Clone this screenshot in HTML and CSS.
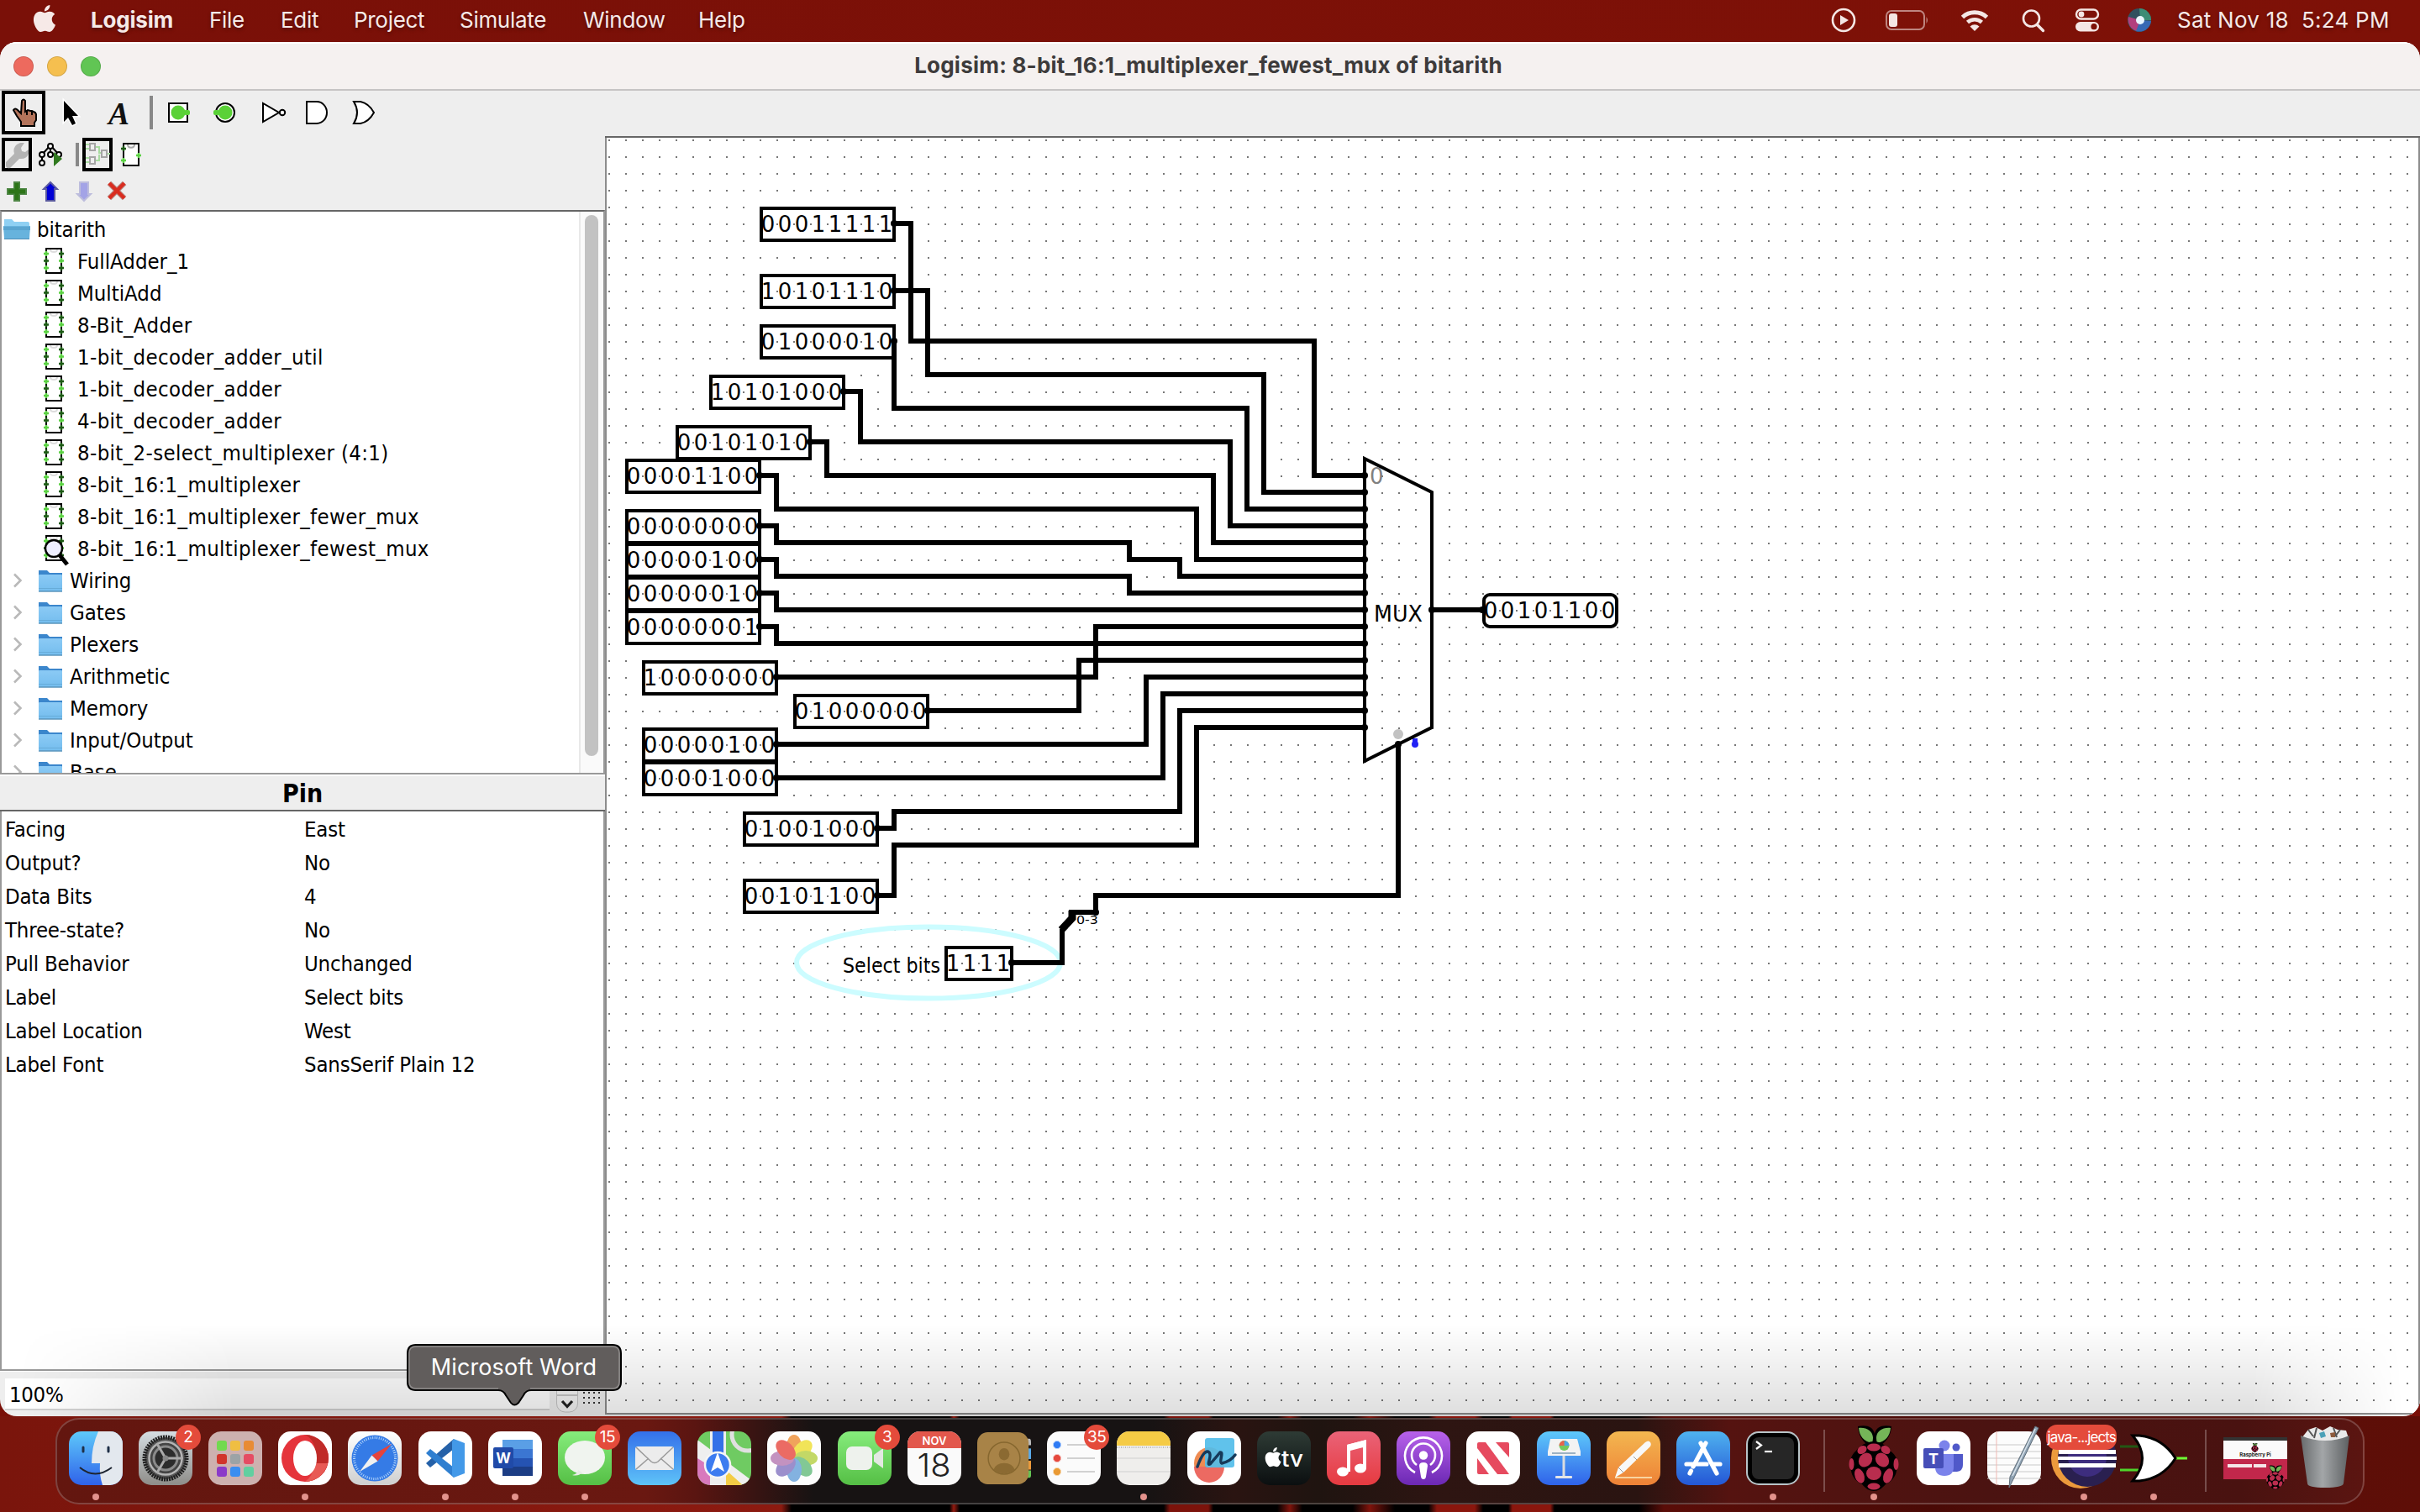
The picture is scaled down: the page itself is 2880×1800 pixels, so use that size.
FILE: index.html
```html
<!DOCTYPE html>
<html lang="en">
<head>
<meta charset="utf-8">
<title>Logisim: 8-bit_16:1_multiplexer_fewest_mux of bitarith</title>
<link rel="stylesheet" href="styles.css">
</head>
<body>
<svg class="defs" width="0" height="0" aria-hidden="true">
  <defs>
    <linearGradient id="gBlue" x1="0" y1="0" x2="0" y2="1"><stop offset="0" stop-color="#5ec9fa"/><stop offset="1" stop-color="#2f62ea"/></linearGradient>
    <linearGradient id="gMail" x1="0" y1="0" x2="0" y2="1"><stop offset="0" stop-color="#3470ea"/><stop offset="1" stop-color="#5ec3f8"/></linearGradient>
    <linearGradient id="gGreen" x1="0" y1="0" x2="0" y2="1"><stop offset="0" stop-color="#86ec7c"/><stop offset="1" stop-color="#55bf45"/></linearGradient>
    <linearGradient id="gGray" x1="0" y1="0" x2="0" y2="1"><stop offset="0" stop-color="#d5dde2"/><stop offset="1" stop-color="#8e8d89"/></linearGradient>
    <linearGradient id="gSilver" x1="0" y1="0" x2="0" y2="1"><stop offset="0" stop-color="#ffffff"/><stop offset="1" stop-color="#cfcfcf"/></linearGradient>
    <linearGradient id="gMusic" x1="0" y1="0" x2="0" y2="1"><stop offset="0" stop-color="#ea6378"/><stop offset="1" stop-color="#e63a40"/></linearGradient>
    <linearGradient id="gPod" x1="0" y1="0" x2="0" y2="1"><stop offset="0" stop-color="#b862ea"/><stop offset="1" stop-color="#6c28b4"/></linearGradient>
    <linearGradient id="gPages" x1="0" y1="0" x2="0" y2="1"><stop offset="0" stop-color="#f3b750"/><stop offset="1" stop-color="#ee8136"/></linearGradient>
    <linearGradient id="gStore" x1="0" y1="0" x2="0" y2="1"><stop offset="0" stop-color="#4fb2ef"/><stop offset="1" stop-color="#2457d6"/></linearGradient>
    <linearGradient id="gTv" x1="0" y1="0" x2="0" y2="1"><stop offset="0" stop-color="#2e3b35"/><stop offset="1" stop-color="#0b0f10"/></linearGradient>
    <linearGradient id="gBin" x1="0" y1="0" x2="1" y2="0"><stop offset="0" stop-color="#686b6d"/><stop offset=".45" stop-color="#a3a6a8"/><stop offset="1" stop-color="#5d6062"/></linearGradient>
    <linearGradient id="gFolder" x1="0" y1="0" x2="0" y2="1"><stop offset="0" stop-color="#8bcaf5"/><stop offset="1" stop-color="#74bdee"/></linearGradient>
    <clipPath id="tile"><rect width="64" height="64" rx="15"/></clipPath>
    <path id="apple" d="M12.152 6.896c-.948 0-2.415-1.078-3.96-1.04-2.04.027-3.91 1.183-4.961 3.014-2.117 3.675-.546 9.103 1.519 12.09 1.013 1.454 2.208 3.09 3.792 3.039 1.52-.065 2.09-.987 3.935-.987 1.831 0 2.35.987 3.96.948 1.637-.026 2.676-1.48 3.676-2.948 1.156-1.688 1.636-3.325 1.662-3.415-.039-.013-3.182-1.221-3.22-4.857-.026-3.04 2.48-4.494 2.597-4.559-1.429-2.09-3.623-2.324-4.39-2.376-2-.156-3.675 1.09-4.61 1.09zM15.53 3.83c.843-1.012 1.4-2.427 1.245-3.83-1.207.052-2.662.805-3.532 1.818-.78.896-1.454 2.338-1.273 3.714 1.338.104 2.715-.688 3.559-1.701"/>
    <g id="raspberry">
      <path d="M32 22C24 16 14 10 13-6C23-8 31-6 33 3C35-6 43-8 53-6C52 10 42 16 32 22Z" fill="#000"/>
      <path d="M14-4c9-1 16 3 17 11c0 4-1 7-1 7C20 12 15 6 14-4zM52-4c-9-1-16 3-17 11c0 4 1 7 1 7C46 12 51 6 52-4z" fill="#75b558"/>
      <path d="M33 12c8 0 15 5 19 11c8 5 12 15 8 24c-1 7-6 13-13 16c-4 5-9 8-14 8s-10-3-14-8c-7-3-12-9-13-16c-4-9 0-19 6-24c4-6 13-11 21-11z" fill="#000" transform="translate(-1 0)"/>
      <g fill="#b92d4e"><ellipse cx="32" cy="19" rx="8" ry="4.500"/><ellipse cx="18" cy="22" rx="6" ry="4.500" transform="rotate(-35 18 22)"/><ellipse cx="46" cy="22" rx="6" ry="4.500" transform="rotate(35 46 22)"/><ellipse cx="22" cy="34" rx="9" ry="7.500" transform="rotate(-50 22 34)"/><ellipse cx="42" cy="34" rx="9" ry="7.500" transform="rotate(50 42 34)"/><ellipse cx="32" cy="50" rx="9" ry="8"/><ellipse cx="15" cy="53" rx="5.500" ry="9" transform="rotate(-20 15 53)"/><ellipse cx="49" cy="53" rx="5.500" ry="9" transform="rotate(20 49 53)"/><ellipse cx="5.500" cy="39" rx="3" ry="7"/><ellipse cx="58.500" cy="39" rx="3" ry="7"/><ellipse cx="32" cy="65.500" rx="7.500" ry="4"/></g>
    </g>
    <symbol id="chip" viewBox="0 0 24 32">
      <rect x="3" y="1" width="18" height="29" fill="#fff" stroke="#000" stroke-width="2"/>
      <path d="M8 2c0 4 8 4 8 0" fill="none" stroke="#ddd" stroke-width="2"/>
      <path d="M0 7h6M3 4v6M0 24h6M3 21v6M18 15.500h6M21 12v6" stroke="#5ad142" stroke-width="2.400"/>
      <path d="M0 15.500h6M3 12v6M18 7h6M21 4v6M18 24h6M21 21v6" stroke="#1c5a14" stroke-width="2.400"/>
    </symbol>
    <symbol id="chip-view" viewBox="0 0 30 38">
      <use href="#chip" width="24" height="32"/>
      <circle cx="12" cy="16" r="10" fill="#eef" stroke="#000" stroke-width="2.400"/>
      <path d="M19 24l9 11" stroke="#000" stroke-width="5"/>
    </symbol>
    <symbol id="folder" viewBox="0 0 30 28">
      <path d="M1 2h10l3 3h15v7H1z" fill="#3b86cc"/>
      <rect x="1" y="7" width="28" height="20" rx="1" fill="url(#gFolder)"/>
      <path d="M1 23.500h28" stroke="#67acd9" stroke-width="1"/><path d="M1 27h28" stroke="#5b96bd" stroke-width="1.500"/>
    </symbol>
    <symbol id="folder-open" viewBox="0 0 32 26">
      <path d="M1 1h9l3 3h16q2 0 2 2v4H1z" fill="#8fd0f3"/>
      <path d="M0 9h32l-1 15H1z" fill="#67b3dd"/><path d="M0 10h32v4H0z" fill="#5aa5d0"/><path d="M1 24.500h30" stroke="#4f8fb8" stroke-width="1"/>
    </symbol>
    <symbol id="chev" viewBox="0 0 12 18"><path d="M2 1.500l7.500 7.500-7.500 7.500" fill="none" stroke="#b9b9b9" stroke-width="2.600"/></symbol>
    <pattern id="grid" x="724" y="166" width="20" height="20" patternUnits="userSpaceOnUse"><rect width="2" height="2" fill="#777"/></pattern>
    <g id="pin8"><rect x="-158" y="-18" width="158" height="38"/><circle r="4"/></g>
  </defs>
</svg>

<header class="menubar">
  <svg class="apple" viewBox="0 0 24 24"><use href="#apple" fill="#f6e9e7"/></svg>
  <nav class="menus">
    <b>Logisim</b><span>File</span><span>Edit</span><span>Project</span><span>Simulate</span><span>Window</span><span>Help</span>
  </nav>
  <svg class="status" viewBox="2176 0 400 48" fill="none" stroke="#f4e6e4">
    <circle cx="2194" cy="24" r="13" stroke-width="2.600"/><path d="M2190 18l10 6-10 6z" fill="#f4e6e4" stroke="none"/>
    <rect x="2245" y="13" width="45" height="22" rx="6" stroke-width="2" opacity=".55"/><rect x="2248" y="16" width="10" height="16" rx="3" fill="#f4e6e4" stroke="none"/><path d="M2292.500 20q3 4 0 8z" fill="#f4e6e4" stroke="none" opacity=".55"/>
    <path d="M2335.500 20.500a21.500 21.500 0 0 1 29 0" stroke-width="5"/><path d="M2341.500 26.500a12.500 12.500 0 0 1 17 0" stroke-width="4.500"/><path d="M2344.500 31.500a8 8 0 0 1 11 0l-5.500 5.500z" fill="#f4e6e4" stroke="none"/>
    <circle cx="2417.500" cy="22" r="9.500" stroke-width="2.600"/><path d="M2424.500 29.500l7 7" stroke-width="3.400" stroke-linecap="round"/>
    <rect x="2471" y="11.500" width="26" height="11" rx="5.500" stroke-width="2.400"/><circle cx="2477" cy="17" r="3.400" fill="#f4e6e4" stroke="none"/>
    <rect x="2470" y="26" width="28" height="11.500" rx="5.700" fill="#f4e6e4" stroke="none"/><circle cx="2492" cy="31.700" r="3.600" fill="#7b1107" stroke="none"/>
    <circle cx="2546" cy="24" r="14" fill="#31505f" stroke="none"/><path d="M2533 20a14 14 0 0 0 10 17l4-13z" fill="#b23f7e" stroke="none"/><path d="M2546 10a14 14 0 0 1 14 14l-13 0z" fill="#3c8d76" stroke="none"/><path d="M2542 37a14 14 0 0 0 18-12l-13-1z" fill="#3769b4" stroke="none"/><ellipse cx="2547" cy="24" rx="5" ry="5" fill="#e8f6ff" stroke="none"/>
  </svg>
  <span class="clock">Sat Nov 18&nbsp; 5:24 PM</span>
</header>

<main class="window">
  <div class="titlebar">
    <div class="lights"><i class="red"></i><i class="amber"></i><i class="green"></i></div>
    <h1>Logisim: 8-bit_16:1_multiplexer_fewest_mux of bitarith</h1>
  </div>
  <svg class="toolbar" viewBox="0 108 480 54">
    <rect x="4" y="110" width="48" height="48" fill="none" stroke="#000" stroke-width="4"/>
    <path d="M26 120q2-3 4 0v13l3-2 3 1 2 0 4 2 1 2v7l-2 3v4H25v-5l-5-7-4-7q2-3 5 0l4 4z" fill="#b3735a" stroke="#000" stroke-width="2"/>
    <path d="M32 132v5M38 133v4" stroke="#000" stroke-width="2"/>
    <path d="M76 120v25l5-5 5 9 4-2-4-9h7z" stroke="#fff" stroke-width="3" fill="#000" paint-order="stroke"/>
    <text class="tool-text" x="129" y="148" textLength="25" lengthAdjust="spacingAndGlyphs">A</text>
    <rect x="178" y="114" width="4" height="40" fill="#888"/>
    <rect x="201" y="123" width="22" height="22" fill="#fff" stroke="#000" stroke-width="2"/><circle cx="212" cy="134" r="8.500" fill="#5ad137"/><rect x="219" y="131" width="7" height="6" rx="2" fill="#5ad137"/>
    <circle cx="268" cy="134" r="11" fill="#fff" stroke="#000" stroke-width="2"/><circle cx="268" cy="134" r="8.500" fill="#5ad137"/><rect x="254" y="131" width="7" height="6" rx="2" fill="#5ad137"/>
    <path d="M313 123v22l19-11z" fill="#fff" stroke="#000" stroke-width="2"/><circle cx="336" cy="134" r="3.200" fill="#fff" stroke="#000" stroke-width="2"/>
    <path d="M365 121h12a12 13 0 0 1 0 26h-12z" fill="#fff" stroke="#000" stroke-width="2"/>
    <path d="M421 121h8q10 2 16 13q-6 11-16 13h-8q8-13 0-26z" fill="#fff" stroke="#000" stroke-width="2"/>
  </svg>
  <div class="workspace">
    <aside class="side">
      <svg class="subbar" viewBox="0 162 720 88">
        <rect x="4" y="166" width="32" height="36" fill="none" stroke="#000" stroke-width="4"/>
        <path d="M7 193l10-10q-2-7 3-11l4-2h5l-4 6 1 4 4 1 4-3v5q-2 6-9 6h-2l-11 11q-4 1-5-2z" fill="#b4b4b4"/>
        <path d="M60 173l-10 11M60 173l10 11M60 176v8M50 186v8" stroke="#000" stroke-width="2"/>
        <g fill="#fff" stroke="#000" stroke-width="2"><circle cx="60" cy="174" r="3"/><circle cx="50" cy="184" r="3"/><circle cx="60" cy="184" r="3"/><circle cx="50" cy="194" r="3"/><circle cx="70" cy="184" r="3"/></g>
        <path d="M64 181l10 8-10 9z" fill="#307a1f"/>
        <rect x="90" y="170" width="4" height="28" fill="#888"/>
        <rect x="100" y="166" width="32" height="36" fill="none" stroke="#000" stroke-width="4"/>
        <g fill="none" stroke-width="2"><path d="M102 172h5M102 177h5M102 188h5M102 193h5M114 175h4v7h4M114 191h4v-7M128 183h3" stroke="#a9dca1"/><rect x="107" y="171" width="6" height="8" stroke="#a5a5a5"/><rect x="107" y="187" width="6" height="8" stroke="#a5a5a5"/><rect x="121" y="179" width="6" height="8" stroke="#a5a5a5"/></g>
        <rect x="147" y="171" width="18" height="26" fill="#fff" stroke="#000" stroke-width="2"/><path d="M152 172c0 5 8 5 8 0" fill="none" stroke="#aaa" stroke-width="2"/>
        <path d="M144 177h6M147 174v6" stroke="#1c5a14" stroke-width="2.400"/><path d="M144 191h6M147 188v6M162 185h6M165 182v6" stroke="#5ad142" stroke-width="2.400"/>
        <path d="M20 216v24M8 228h24" stroke="#4f8746" stroke-width="8"/><path d="M20 218v20M10 228h20" stroke="#2d7518" stroke-width="5"/>
        <path d="M60 217l8 8h-3v14h-10v-14h-3z" fill="#0000d6" stroke="#5a5aa0" stroke-width="2"/>
        <path d="M100 239l8-8h-3v-14h-10v14h-3z" fill="#a3a3e6" stroke="#bdbddd" stroke-width="2"/>
        <path d="M130 218l18 18M148 218l-18 18" stroke="#b98e88" stroke-width="6.500"/><path d="M130 218l18 18M148 218l-18 18" stroke="#d92d20" stroke-width="4.500"/>
      </svg>
      <section class="tree">
        <ul>
          <li class="root"><svg><use href="#folder-open"/></svg>bitarith</li>
          <li class="leaf"><svg><use href="#chip"/></svg>FullAdder_1</li>
          <li class="leaf"><svg><use href="#chip"/></svg>MultiAdd</li>
          <li class="leaf loose"><svg><use href="#chip"/></svg>8-Bit_Adder</li>
          <li class="leaf loose"><svg><use href="#chip"/></svg>1-bit_decoder_adder_util</li>
          <li class="leaf loose"><svg><use href="#chip"/></svg>1-bit_decoder_adder</li>
          <li class="leaf loose"><svg><use href="#chip"/></svg>4-bit_decoder_adder</li>
          <li class="leaf loose"><svg><use href="#chip"/></svg>8-bit_2-select_multiplexer (4:1)</li>
          <li class="leaf loose"><svg><use href="#chip"/></svg>8-bit_16:1_multiplexer</li>
          <li class="leaf loose"><svg><use href="#chip"/></svg>8-bit_16:1_multiplexer_fewer_mux</li>
          <li class="leaf loose current"><svg><use href="#chip-view"/></svg>8-bit_16:1_multiplexer_fewest_mux</li>
          <li class="lib"><svg class="chev"><use href="#chev"/></svg><svg><use href="#folder"/></svg>Wiring</li>
          <li class="lib"><svg class="chev"><use href="#chev"/></svg><svg><use href="#folder"/></svg>Gates</li>
          <li class="lib"><svg class="chev"><use href="#chev"/></svg><svg><use href="#folder"/></svg>Plexers</li>
          <li class="lib"><svg class="chev"><use href="#chev"/></svg><svg><use href="#folder"/></svg>Arithmetic</li>
          <li class="lib"><svg class="chev"><use href="#chev"/></svg><svg><use href="#folder"/></svg>Memory</li>
          <li class="lib"><svg class="chev"><use href="#chev"/></svg><svg><use href="#folder"/></svg>Input/Output</li>
          <li class="lib"><svg class="chev"><use href="#chev"/></svg><svg><use href="#folder"/></svg>Base</li>
        </ul>
        <div class="track"><div class="thumb"></div></div>
      </section>
      <h2>Pin</h2>
      <dl class="attrs">
        <dt>Facing</dt><dd>East</dd>
        <dt>Output?</dt><dd>No</dd>
        <dt>Data Bits</dt><dd>4</dd>
        <dt>Three-state?</dt><dd>No</dd>
        <dt>Pull Behavior</dt><dd>Unchanged</dd>
        <dt>Label</dt><dd>Select bits</dd>
        <dt>Label Location</dt><dd>West</dd>
        <dt>Label Font</dt><dd>SansSerif Plain 12</dd>
      </dl>
      <div class="zoombar">
        <div class="zoom">100%</div>
        <svg class="spin" viewBox="660 1634 60 50">
          <rect x="662.500" y="1638" width="25" height="42" rx="10" fill="#f4f4f4" stroke="#c4c4c4"/><path d="M662 1660h26" stroke="#c4c4c4" stroke-width="2"/><path d="M669 1667l6 6.500 6-6.500" fill="none" stroke="#222" stroke-width="3.200"/>
          <path d="M694 1657h22M694 1663h22M694 1669h22" stroke="#333" stroke-width="2" stroke-dasharray="2 4"/>
        </svg>
      </div>
    </aside>
    <svg class="canvas" viewBox="720 162 2160 1522">
      <rect x="720" y="162" width="2160" height="1522" fill="#fff"/>
      <rect x="722" y="164" width="2154" height="1518" fill="url(#grid)"/>
      <ellipse cx="1105" cy="1146" rx="157" ry="42.500" fill="none" stroke="#ccfcff" stroke-width="6"/>
      <g class="wires">
        <path d="M1064 266H1084V406H1564V566H1624"/>
        <path d="M1064 346H1104V446H1504V586H1624"/>
        <path d="M1064 406V486H1484V606H1624"/>
        <path d="M1004 466H1024V526H1464V626H1624"/>
        <path d="M964 526H984V566H1444V646H1624"/>
        <path d="M904 566H924V606H1424V666H1624"/>
        <path d="M904 626H924V646H1344V666H1404V686H1624"/>
        <path d="M904 666H924V686H1344V706H1624"/>
        <path d="M904 706H924V726H1624"/>
        <path d="M904 746H924V766H1624"/>
        <path d="M924 806H1304V746H1624"/>
        <path d="M1104 846H1284V786H1624"/>
        <path d="M924 886H1364V806H1624"/>
        <path d="M924 926H1384V826H1624"/>
        <path d="M1044 986H1064V966H1404V846H1624"/>
        <path d="M1044 1066H1064V1006H1424V866H1624"/>
        <path d="M1204 1146H1264V1106M1304 1086V1066H1664V884"/>
        <path d="M1704 726H1764M1272 1086H1304"/>
        <path class="splitter" d="M1263 1107L1276 1093V1084"/>
      </g>
      <path d="M1684 879v8" stroke="#2222f5" stroke-width="6"/><circle cx="1684" cy="886" r="4" fill="#2222f5"/>
      <circle cx="1664" cy="874" r="6" fill="#c2c2c2"/>
      <path class="mux" d="M1624 546L1704 586V866L1624 906Z"/>
      <g class="ports">
        <circle cx="1624" cy="566" r="4"/><circle cx="1624" cy="586" r="4"/><circle cx="1624" cy="606" r="4"/><circle cx="1624" cy="626" r="4"/><circle cx="1624" cy="646" r="4"/><circle cx="1624" cy="666" r="4"/><circle cx="1624" cy="686" r="4"/><circle cx="1624" cy="706" r="4"/><circle cx="1624" cy="726" r="4"/><circle cx="1624" cy="746" r="4"/><circle cx="1624" cy="766" r="4"/><circle cx="1624" cy="786" r="4"/><circle cx="1624" cy="806" r="4"/><circle cx="1624" cy="826" r="4"/><circle cx="1624" cy="846" r="4"/><circle cx="1624" cy="866" r="4"/><circle cx="1704" cy="726" r="4"/><circle cx="1764" cy="726" r="4"/><circle cx="1664" cy="886" r="4"/><circle cx="1304" cy="1086" r="4"/>
      </g>
      <g class="pins">
        <g transform="translate(1064 266)"><use href="#pin8"/><text y="10" x="-150 -130 -110 -90 -70 -50 -30 -10">00011111</text></g>
        <g transform="translate(1064 346)"><use href="#pin8"/><text y="10" x="-150 -130 -110 -90 -70 -50 -30 -10">10101110</text></g>
        <g transform="translate(1064 406)"><use href="#pin8"/><text y="10" x="-150 -130 -110 -90 -70 -50 -30 -10">01000010</text></g>
        <g transform="translate(1004 466)"><use href="#pin8"/><text y="10" x="-150 -130 -110 -90 -70 -50 -30 -10">10101000</text></g>
        <g transform="translate(964 526)"><use href="#pin8"/><text y="10" x="-150 -130 -110 -90 -70 -50 -30 -10">00101010</text></g>
        <g transform="translate(904 566)"><use href="#pin8"/><text y="10" x="-150 -130 -110 -90 -70 -50 -30 -10">00001100</text></g>
        <g transform="translate(904 626)"><use href="#pin8"/><text y="10" x="-150 -130 -110 -90 -70 -50 -30 -10">00000000</text></g>
        <g transform="translate(904 666)"><use href="#pin8"/><text y="10" x="-150 -130 -110 -90 -70 -50 -30 -10">00000100</text></g>
        <g transform="translate(904 706)"><use href="#pin8"/><text y="10" x="-150 -130 -110 -90 -70 -50 -30 -10">00000010</text></g>
        <g transform="translate(904 746)"><use href="#pin8"/><text y="10" x="-150 -130 -110 -90 -70 -50 -30 -10">00000001</text></g>
        <g transform="translate(924 806)"><use href="#pin8"/><text y="10" x="-150 -130 -110 -90 -70 -50 -30 -10">10000000</text></g>
        <g transform="translate(1104 846)"><use href="#pin8"/><text y="10" x="-150 -130 -110 -90 -70 -50 -30 -10">01000000</text></g>
        <g transform="translate(924 886)"><use href="#pin8"/><text y="10" x="-150 -130 -110 -90 -70 -50 -30 -10">00000100</text></g>
        <g transform="translate(924 926)"><use href="#pin8"/><text y="10" x="-150 -130 -110 -90 -70 -50 -30 -10">00001000</text></g>
        <g transform="translate(1044 986)"><use href="#pin8"/><text y="10" x="-150 -130 -110 -90 -70 -50 -30 -10">01001000</text></g>
        <g transform="translate(1044 1066)"><use href="#pin8"/><text y="10" x="-150 -130 -110 -90 -70 -50 -30 -10">00101100</text></g>
        <g transform="translate(1204 1146)"><rect x="-78" y="-18" width="78" height="38"/><circle r="4"/><text y="10" x="-70 -50 -30 -10">1111</text></g>
        <g transform="translate(1924 726)"><rect x="-158" y="-18" width="158" height="38" rx="7"/><text y="10" x="-150 -130 -110 -90 -70 -50 -30 -10">00101100</text></g>
      </g>
      <g class="labels">
        <text x="1003" y="1157.500" textLength="116" lengthAdjust="spacingAndGlyphs">Select bits</text>
        <text class="sans" x="1635" y="739.500" font-size="26" textLength="58" lengthAdjust="spacingAndGlyphs">MUX</text>
        <text class="sans" x="1630" y="576" font-size="26" fill="#808080">0</text>
        <text x="1281" y="1100" font-size="14.500" textLength="26" lengthAdjust="spacingAndGlyphs">0-3</text>
      </g>
      <path d="M720 163H2880" stroke="#666" stroke-width="2"/>
      <path d="M721 164V1683H2879V164" fill="none" stroke="#8c8c8c" stroke-width="2"/>
    </svg>
  </div>
  <div class="dockshade"></div>
</main>

<nav class="dock">
  <div class="app on"><svg viewBox="0 0 64 64"><g clip-path="url(#tile)"><rect width="64" height="64" fill="url(#gBlue)"/><path d="M35 0Q27 18 27 38h10Q36 52 40 64H64V0z" fill="#e3e8ee"/></g><path d="M17 19v5M47 19v5" stroke="#1e2f47" stroke-width="3" stroke-linecap="round"/><path d="M13 43q18 15 38 0" fill="none" stroke="#1e2530" stroke-width="2"/></svg></div>
  <div class="app"><svg viewBox="0 0 64 64"><rect width="64" height="64" rx="15" fill="url(#gGray)"/><circle cx="32" cy="32" r="25" fill="#575757" stroke="#202020" stroke-width="5" stroke-dasharray="2 1"/><circle cx="32" cy="32" r="19.500" fill="#444" stroke="#b4b4b4" stroke-width="2.500"/><circle cx="32" cy="32" r="14" fill="#2c2c2c" stroke="#8a8a8a" stroke-width="3"/><path d="M32 32h21M32 32L21.500 14M32 32L21.500 50" stroke="#aaa" stroke-width="3"/><circle cx="32" cy="32" r="3.500" fill="#888"/></svg><b class="badge">2</b></div>
  <div class="app"><svg viewBox="0 0 64 64"><rect width="64" height="64" rx="15" fill="#cdb1af"/><rect x="10" y="11" width="12" height="12" rx="3" fill="#72d94f"/><rect x="26" y="11" width="12" height="12" rx="3" fill="#efbe42"/><rect x="42" y="11" width="12" height="12" rx="3" fill="#e88b34"/><rect x="10" y="27" width="12" height="12" rx="3" fill="#d1352b"/><rect x="26" y="27" width="12" height="12" rx="3" fill="#9ca3a6"/><rect x="42" y="27" width="12" height="12" rx="3" fill="#e54c63"/><rect x="10" y="42" width="12" height="12" rx="3" fill="#8a3bc9"/><rect x="26" y="42" width="12" height="12" rx="3" fill="#3b8ef0"/><rect x="42" y="42" width="12" height="12" rx="3" fill="#61cfa0"/></svg></div>
  <div class="app on"><svg viewBox="0 0 64 64"><rect width="64" height="64" rx="15" fill="#fff"/><ellipse cx="32" cy="32" rx="28" ry="28" fill="#e5343b"/><path d="M32 4a28 28 0 0 1 0 56q13-6 13-28T32 4z" fill="#c02b28"/><path d="M32 60a28 28 0 0 0 27-22l-15 0q-3 16-12 22z" fill="#e85a55"/><ellipse cx="32" cy="32" rx="14" ry="21" fill="#fff"/></svg></div>
  <div class="app"><svg viewBox="0 0 64 64"><rect width="64" height="64" rx="15" fill="url(#gSilver)"/><circle cx="32" cy="32" r="27.500" fill="#357be6"/><circle cx="32" cy="32" r="24.500" fill="none" stroke="#b5d6fa" stroke-width="3" stroke-dasharray="1 1.600"/><path d="M52 15L35.500 35.500 28.500 28.500z" fill="#e5433b"/><path d="M14 48L28.500 28.500 35.500 35.500z" fill="#f0f0f0"/></svg></div>
  <div class="app on"><svg viewBox="0 0 64 64"><rect width="64" height="64" rx="15" fill="#fff"/><path d="M42 9v12L14 43l-5-5z" fill="#2561a8"/><path d="M9 26l5-5 28 22v12z" fill="#2f7fd0"/><path d="M42 9l13 5v36l-13 5-2-3V12z" fill="#4399e8"/></svg></div>
  <div class="app on"><svg viewBox="0 0 64 64"><rect width="64" height="64" rx="15" fill="#fff"/><rect x="17" y="10" width="36" height="11" fill="#5a9fe6"/><rect x="17" y="21" width="36" height="11" fill="#3b76d2"/><rect x="17" y="32" width="36" height="10" fill="#2553b2"/><rect x="17" y="42" width="36" height="11" fill="#1c3d85"/><rect x="6" y="19" width="24" height="25" rx="2" fill="#204aa8"/><text x="18" y="38" font-size="17" font-weight="bold" fill="#fff" text-anchor="middle">W</text></svg></div>
  <div class="app on"><svg viewBox="0 0 64 64"><rect width="64" height="64" rx="15" fill="url(#gGreen)"/><ellipse cx="32" cy="31" rx="24" ry="20" fill="#f0f4ef"/><path d="M17 52q6-1 7-6l5 3q-5 5-12 3z" fill="#e7ece6"/></svg><b class="badge">15</b></div>
  <div class="app"><svg viewBox="0 0 64 64"><rect width="64" height="64" rx="15" fill="url(#gMail)"/><rect x="9" y="18" width="46" height="28" rx="3" fill="#ececec"/><path d="M10 19l18 17q4 3 8 0l18-17M10 45l15-13M54 45L39 32" fill="none" stroke="#9a9a9a" stroke-width="1.500"/></svg></div>
  <div class="app"><svg viewBox="0 0 64 64"><g clip-path="url(#tile)"><rect width="64" height="64" fill="#6fcb62"/><path d="M0 10L64 58v6H34L0 34z" fill="#efefef"/><path d="M0 32l16 10v22H0z" fill="#d879bd"/><path d="M34 46l20 18H34z" fill="#f3cc46"/><path d="M15 0h19v64H15z" fill="#eee"/><path d="M18 0h13v42H18z" fill="#3470e8"/><circle cx="60" cy="4" r="19" fill="none" stroke="#e0e0e0" stroke-width="5"/></g><circle cx="24" cy="40" r="15" fill="#3d7cf0" stroke="#f5f5f5" stroke-width="2.500"/><path d="M24 25l8 23-8-5-8 5z" fill="#fff"/></svg></div>
  <div class="app"><svg viewBox="0 0 64 64"><rect width="64" height="64" rx="15" fill="#fdfdfd"/><g opacity=".85"><ellipse cx="32" cy="18" rx="9" ry="14" fill="#ee9440"/><ellipse cx="32" cy="18" rx="9" ry="14" fill="#efe03c" transform="rotate(45 32 32)"/><ellipse cx="32" cy="18" rx="9" ry="14" fill="#b9d24c" transform="rotate(90 32 32)"/><ellipse cx="32" cy="18" rx="9" ry="14" fill="#6dbf83" transform="rotate(135 32 32)"/><ellipse cx="32" cy="18" rx="9" ry="14" fill="#6ea6dc" transform="rotate(180 32 32)"/><ellipse cx="32" cy="18" rx="9" ry="14" fill="#8a7cc4" transform="rotate(225 32 32)"/><ellipse cx="32" cy="18" rx="9" ry="14" fill="#b980b6" transform="rotate(270 32 32)"/><ellipse cx="32" cy="18" rx="9" ry="14" fill="#e8524a" transform="rotate(315 32 32)"/></g></svg></div>
  <div class="app"><svg viewBox="0 0 64 64"><rect width="64" height="64" rx="15" fill="url(#gGreen)"/><rect x="10" y="18" width="31" height="28" rx="7" fill="#eef2ed"/><path d="M43 28l11-8v24l-11-8z" fill="#e3e8e2"/></svg><b class="badge">3</b></div>
  <div class="app"><svg viewBox="0 0 64 64"><g clip-path="url(#tile)"><rect width="64" height="64" fill="#fafafa"/><rect width="64" height="20" fill="#e2574c"/></g><text x="32" y="15.500" font-size="13" font-weight="600" fill="#fff" text-anchor="middle">NOV</text><text x="31.500" y="54" font-size="38" font-weight="300" fill="#222" text-anchor="middle" textLength="40" lengthAdjust="spacingAndGlyphs">18</text></svg></div>
  <div class="app"><svg viewBox="0 0 66 64"><path d="M58 8h6q2 0 2 4v4h-8z" fill="#b9b9b9"/><path d="M58 20h8v13h-8z" fill="#5aaae8"/><path d="M58 35h8v11h-8z" fill="#ee9b3b"/><path d="M58 47h8v6q0 3-2 3h-6z" fill="#64c453"/><rect width="63" height="64" rx="13" fill="#a88347"/><circle cx="33" cy="32" r="19.500" fill="none" stroke="#86672f" stroke-width="1.500"/><ellipse cx="33" cy="27" rx="6.500" ry="7.500" fill="#8b6a32"/><path d="M20 46q3-8 13-8t13 8q-13 10-26 0z" fill="#8b6a32"/></svg></div>
  <div class="app"><svg viewBox="0 0 64 64"><rect width="64" height="64" rx="15" fill="#fbfbfb"/><circle cx="12" cy="16" r="4.600" fill="#2f7bf4" stroke="#b7d2fb"/><circle cx="12" cy="32" r="4.600" fill="#e5483d" stroke="#f4beba"/><circle cx="12" cy="48" r="4.600" fill="#ea9a34" stroke="#f6dab2"/><path d="M24 16h33M24 32h33M24 48h33" stroke="#c4c4c4" stroke-width="1.500"/></svg><b class="badge">35</b></div>
  <div class="app on"><svg viewBox="0 0 64 64"><g clip-path="url(#tile)"><rect width="64" height="64" fill="#efeeec"/><rect width="64" height="17" fill="#f5cb45"/></g><path d="M0 19h64" stroke="#888" stroke-dasharray="1 1.500"/><path d="M0 32h64M0 48h64" stroke="#cfcfcf"/></svg></div>
  <div class="app"><svg viewBox="0 0 64 64"><rect width="64" height="64" rx="15" fill="#fff"/><ellipse cx="26" cy="38" rx="18" ry="19" fill="#ee8b52"/><path d="M8 42a18 19 0 0 0 36 0z" fill="#ec6a62"/><rect x="21" y="8" width="35" height="35" rx="3" fill="#52bde9" opacity=".92"/><path d="M12 42q8-22 14-17c4 4-4 16 1 14q8-9 12-14c5-1-2 12 2 13q10-2 16-10" fill="none" stroke="#163a5a" stroke-width="3.500" stroke-linecap="round"/></svg></div>
  <div class="app"><svg viewBox="0 0 64 64"><rect width="64" height="64" rx="15" fill="url(#gTv)"/><use href="#apple" transform="translate(7.500 19) scale(.97)" fill="#fff"/><text x="29" y="42" font-size="26" font-weight="500" fill="#fff" textLength="26" lengthAdjust="spacingAndGlyphs">tv</text></svg></div>
  <div class="app"><svg viewBox="0 0 64 64"><rect width="64" height="64" rx="15" fill="url(#gMusic)"/><path d="M24 16l23-6v5l-19 5v28h-4z" fill="#fff"/><path d="M24 16l23-6v8l-23 6zM43 14h4v30h-4z" fill="#fff"/><ellipse cx="19" cy="48" rx="7" ry="5.500" fill="#fff"/><ellipse cx="40" cy="44" rx="7" ry="5.500" fill="#fff"/></svg></div>
  <div class="app"><svg viewBox="0 0 64 64"><rect width="64" height="64" rx="15" fill="url(#gPod)"/><g fill="none" stroke="#fff" stroke-width="2.600"><path d="M22 49a22 22 0 1 1 20 0"/><path d="M24 40a14 14 0 1 1 16 0"/></g><circle cx="32" cy="28.500" r="5.200" fill="#fff"/><path d="M27 41q0-4 5-4t5 4l-2 13q-.5 3-3 3t-3-3z" fill="#fff"/></svg></div>
  <div class="app"><svg viewBox="0 0 64 64"><rect width="64" height="64" rx="15" fill="#fff"/><path d="M15 13h8l28 38H37L13 20v-5q0-2 2-2z" fill="#e64a5f"/><path d="M35 13h14q2 0 2 2v16zM13 32l14 19H15q-2 0-2-2z" fill="#e64a5f"/></svg></div>
  <div class="app"><svg viewBox="0 0 64 64"><rect width="64" height="64" rx="15" fill="url(#gBlue)"/><path d="M16 9h32l4 15v5H13v-5z" fill="#f3f3f3"/><path d="M18 26h28" stroke="#9db2c2" stroke-width="2"/><circle cx="32.500" cy="17" r="6" fill="#73c95e"/><path d="M32.500 17v-6a6 6 0 0 1 6 6z" fill="#4da4e8"/><path d="M32.500 17h-6a6 6 0 0 1 6-6z" fill="#e5634e"/><path d="M30.500 29h3v24h-3z" fill="#d9dde0"/><rect x="22" y="53" width="20" height="3" rx="1" fill="#e3e6e8"/></svg></div>
  <div class="app"><svg viewBox="0 0 64 64"><rect width="64" height="64" rx="15" fill="url(#gPages)"/><path d="M10 55h44" stroke="#f9d4a0" stroke-width="2"/><path d="M10 55l4-12L46 13q4-3 6 0t-1 6L20 49z" fill="#f8f8f8"/><path d="M32 30l4 4M14 43l6 6" stroke="#999" stroke-width="1"/></svg></div>
  <div class="app"><svg viewBox="0 0 64 64"><rect width="64" height="64" rx="15" fill="url(#gStore)"/><g stroke="#fff" stroke-width="5.200" stroke-linecap="round"><path d="M35 14L20 42M17.500 47l-1.500 3M29 14l19 36M12 39h24M44 39h8"/></g></svg></div>
  <div class="app on"><svg viewBox="0 0 64 64"><rect width="64" height="64" rx="15" fill="#b8c4c8"/><rect x="2" y="2" width="60" height="60" rx="13" fill="#000"/><rect x="7" y="7" width="50" height="50" rx="8" fill="#262626"/><path d="M12 12l6 4.500-6 4.500" fill="none" stroke="#fff" stroke-width="2.200"/><path d="M22 24h9" stroke="#fff" stroke-width="2.200"/></svg></div>
  <i class="rule"></i>
  <div class="app on"><svg viewBox="0 0 64 64"><use href="#raspberry"/></svg></div>
  <div class="app"><svg viewBox="0 0 64 64"><rect width="64" height="64" rx="15" fill="#fff"/><circle cx="47" cy="19" r="4.500" fill="#5059c9"/><path d="M40 27h15v13q0 7-7 8h-8z" fill="#5059c9"/><circle cx="33" cy="17" r="6.500" fill="#7b83eb"/><path d="M22 27h22v15q0 11-11 11t-11-11z" fill="#7b83eb"/><rect x="8" y="20" width="24" height="24" rx="2" fill="#464eb8"/><text x="20" y="38.500" font-size="18" font-weight="bold" fill="#fff" text-anchor="middle">T</text></svg></div>
  <div class="app"><svg viewBox="0 0 64 64"><rect width="64" height="64" rx="15" fill="#fcfcfc"/><path d="M0 16h64M0 24h64M0 32h64M0 40h64M0 48h64M0 56h64" stroke="#c9c9c9"/><path d="M11 0v64" stroke="#f0b9b3"/><path d="M57-6l4 2-29 59-6 12 1-13z" fill="#8fa2b3" stroke="#5e6c78"/><path d="M57-3L30 53" stroke="#d9e4ec" stroke-width="1.500"/></svg></div>
  <div class="app on"><svg viewBox="0 0 64 64"><ellipse cx="28" cy="32" rx="35" ry="36" fill="#ec9a3c"/><circle cx="36" cy="31" r="35" fill="#2a2050"/><circle cx="36" cy="31" r="23" fill="#42318a" opacity=".8"/><path d="M2 22h68v5H2zM1 30h70v4H1zM2 38h68v5H2z" fill="#fff"/></svg><b class="badge wide">java-...jects</b></div>
  <div class="app on"><svg viewBox="0 0 64 64"><path d="M-8 18h22" stroke="#225814" stroke-width="3"/><path d="M-8 46h22" stroke="#4fd62b" stroke-width="3"/><path d="M58 32h14" stroke="#6fff35" stroke-width="3"/><path d="M7 5h8q28 3 43 27Q43 56 15 59H7Q30 32 7 5z" fill="#fff" stroke="#000" stroke-width="3"/></svg></div>
  <i class="rule second"></i>
  <div class="app"><svg viewBox="0 0 64 64"><g transform="translate(-6 7)"><rect width="76" height="50" fill="#c2274b"/><rect width="76" height="26" fill="#fafafa"/><rect width="76" height="4" fill="#333"/><rect x="5" y="32" width="29" height="4" fill="#f5e5e8"/><rect x="36" y="32" width="15" height="4" fill="#f5e5e8"/><text x="38" y="23" font-size="6" font-weight="bold" text-anchor="middle" fill="#222">Raspberry Pi</text><g transform="translate(33 8) scale(.14)"><use href="#raspberry"/></g><g transform="translate(50 36) scale(.37)"><use href="#raspberry"/></g></g></svg></div>
  <div class="app"><svg viewBox="0 0 64 64"><path d="M4 8l8-10 9-3 8 4 9-5 9 4 10 1 3 9-6 6H10z" fill="#e9e9e9"/><path d="M12-2l6 8M22-4l-3 12M42-4l4 11M50-2l-6 8" stroke="#555" stroke-width="2"/><path d="M25 2l6-2 2 6-6 2z" fill="#4ba0b7"/><path d="M38 2l6-1v6h-5z" fill="#8c5a3c"/><path d="M3 5q29 12 58 0l-7 57q-1 5-22 5T11 62z" fill="url(#gBin)"/></svg></div>
</nav>

<div class="tip">
  <svg viewBox="0 0 260 74"><path d="M11 1h234q10 0 10 10v34q0 10-10 10h-97q-6 0-9 6l-6 9q-5 5-9 0l-6-9q-3-6-9-6H11Q1 55 1 45V11Q1 1 11 1z" fill="#615d5c" stroke="#000" stroke-width="2"/><path d="M11 3h234q8 0 8 8v34q0 8-8 8M11 3q-8 0-8 8v34q0 8 8 8h98M245 53h-98" fill="none" stroke="#8d8a89" stroke-width="1.500"/></svg>
  <span>Microsoft Word</span>
</div>
</body>
</html>
```
FILE: styles.css
```css
* { box-sizing: border-box; }

body {
  margin: 0;
  width: 2880px;
  height: 1800px;
  overflow: hidden;
  position: relative;
  font-family: Inter, "Liberation Sans", sans-serif;
  color: #000;
  background:
    linear-gradient(90deg, #7a150c 0, #8c1a10 930px, #000 942px, #000 1130px, #951b10 1135px, #000 1142px, #000 1385px, #7c130b 1392px, #7c130b 1438px, #000 1444px, #000 1520px, #80140c 1535px, #000 1550px, #000 1610px, #80140c 1630px, #000 1660px, #000 1700px, #8a160d 1710px, #8a160d 1755px, #000 1765px, #000 1795px, #8a160d 1800px, #8a160d 1845px, #000 1850px, #000 1950px, #5a0d08 1980px, #4a0a06 2300px, #5a0f0a 2600px, #5e0e07 2880px) 0 1686px / 100% 114px no-repeat,
    #7a1008;
}

.defs { position: absolute; }

svg { display: block; flex: none; overflow: visible; }

svg text { font-family: Inter, "Liberation Sans", sans-serif; }

/* Menu bar */
.menubar {
  height: 48px;
  display: flex;
  align-items: center;
  color: #f6e9e7;
  font-size: 26px;
  background: linear-gradient(90deg, #7a1008, #7e1107);
  text-shadow: 0 2px 4px rgba(0, 0, 0, .35);
}

.apple { width: 32px; height: 32px; margin: -4px 39px 0 37px; }

.menus {
  display: grid;
  grid-template-columns: 141px 85px 87px 126px 147px 137px auto;
  flex: 1;
  padding-bottom: 2px;
}

.menus b { font-weight: 700; letter-spacing: -.2px; }

.menus span { letter-spacing: -.3px; }

.status { width: 400px; height: 48px; }

.clock { width: 304px; padding: 0 0 2px 15px; white-space: nowrap; letter-spacing: .25px; }

/* Application window */
.window {
  position: relative;
  height: 1636px;
  margin-top: 2px;
  border-radius: 20px;
  overflow: hidden;
  background: #eee;
}

.titlebar {
  height: 58px;
  display: grid;
  grid-template-columns: 400px 1fr 404px;
  align-items: center;
  background: #f5f1f0;
  border-top: 2px solid #fff;
  border-bottom: 2px solid #c6c4c4;
}

.lights { display: flex; gap: 16px; padding-left: 16px; }

.lights i { width: 24px; height: 24px; border-radius: 50%; border: 1px solid rgba(0, 0, 0, .13); }

.red { background: #ed6a5e; }

.amber { background: #f5bf4f; }

.green { background: #61c554; }

h1 {
  margin: 0;
  padding-bottom: 3px;
  font-size: 26px;
  letter-spacing: .22px;
  font-weight: 700;
  text-align: center;
  white-space: nowrap;
  color: #3d3b3b;
}

.toolbar { width: 480px; height: 54px; }

.toolbar .tool-text {
  font: italic bold 37px "Liberation Serif", serif;
  fill: #111;
}

.workspace { display: grid; grid-template-columns: 720px 2160px; height: 1524px; }

.side {
  display: flex;
  flex-direction: column;
  height: 1524px;
  font-family: "DejaVu Sans Condensed", "DejaVu Sans", sans-serif;
  font-stretch: condensed;
  font-size: 25.500px;
}

.subbar { width: 720px; height: 88px; }

.tree {
  height: 672px;
  display: flex;
  justify-content: space-between;
  overflow: hidden;
  background: #fff;
  border: 2px solid #999;
  border-top-color: #666;
}

.tree ul { list-style: none; margin: 0; padding: 2px 0 0; }

.tree li { height: 38px; display: flex; align-items: center; white-space: nowrap; }

.root { padding-left: 2px; letter-spacing: -.15px; }

.root svg { width: 32px; height: 26px; margin-right: 8px; }

.leaf { padding-left: 50px; }

.leaf svg { width: 24px; height: 32px; margin-right: 16px; }

.loose { letter-spacing: .38px; }

.current svg { width: 30px; height: 38px; margin: 6px 10px 0 0; }

.lib svg { width: 30px; height: 28px; margin-right: 8px; }

.lib .chev { width: 12px; height: 18px; margin: 0 18px 0 13px; }

.track { width: 29px; padding: 4px 5px; border-left: 2px solid #e8e8e8; background: #fafafa; }

.thumb { width: 16px; height: 644px; border-radius: 8px; background: #c2c2c2; }

h2 {
  margin: 0;
  height: 44px;
  line-height: 42px;
  border-top: 2px solid #fff;
  border-bottom: 2px solid #666;
  background: #eee;
  font-size: 30px;
  text-align: center;
}

.attrs {
  margin: 0;
  height: 666px;
  display: grid;
  grid-template-columns: 356px 1fr;
  grid-auto-rows: 40px;
  align-content: start;
  align-items: center;
  padding: 1px 0 0 4px;
  background: #fff;
  border: 2px solid #999;
  border-top: 0;
  letter-spacing: -.18px;
}

.attrs dd { margin: 0; }

.zoombar { display: flex; flex: 1; padding: 2px 0 0 6px; gap: 6px; border-top: 1px solid #fff; }

.zoom {
  width: 648px;
  height: 38px;
  margin-top: 6px;
  padding-left: 5px;
  line-height: 39px;
  background: #fff;
  border-bottom: 2px solid #d2d2d2;
  letter-spacing: -.3px;
}

.spin { width: 60px; height: 50px; }

/* Circuit canvas */
.canvas { width: 2160px; height: 1522px; }

.wires path { fill: none; stroke: #000; stroke-width: 6; }

.wires .splitter { stroke-width: 9; }

.mux { fill: none; stroke: #000; stroke-width: 4; }

.pins rect { fill: none; stroke: #000; stroke-width: 4; }

#pin8 rect { fill: none; stroke: #000; stroke-width: 4; }

.pins text {
  font-family: "DejaVu Sans", sans-serif;
  font-size: 26px;
  text-anchor: middle;
}

.labels text {
  font-family: "DejaVu Sans Condensed", "DejaVu Sans", sans-serif;
  font-stretch: condensed;
}

.labels text:first-child { font-size: 25px; }

.labels .sans { font-family: "DejaVu Sans", sans-serif; font-stretch: normal; }

/* Shade the dock throws on the lower edge of the window */
.dockshade {
  position: absolute;
  inset: auto 0 0 0;
  height: 110px;
  background: linear-gradient(180deg, rgba(0, 0, 0, 0), rgba(0, 0, 0, .13));
  -webkit-mask-image: linear-gradient(90deg, transparent 20px, #000 280px, #000 2680px, transparent 2860px);
  mask-image: linear-gradient(90deg, transparent 20px, #000 280px, #000 2680px, transparent 2860px);
}

/* Dock */
.dock {
  width: 2748px;
  height: 103px;
  margin: 2px 0 0 66px;
  padding: 14px 0 0 4px;
  display: flex;
  border: 2px solid rgba(255, 255, 255, .2);
  border-radius: 28px;
  background: linear-gradient(90deg, #63160f 0, #6a1811 700px, #5a1511 760px, #171313 900px, #171313 1300px, #2a1411 1400px, #1f1410 1500px, #2e1512 1650px, #2a1411 1880px, #551310 1990px, #4b1311 2300px, #491210 2600px, #5b1511 2744px);
}

.app {
  position: relative;
  flex: none;
  width: 83.200px;
  display: flex;
  justify-content: center;
}

.app > svg { width: 64px; height: 64px; }

.on::after {
  content: "";
  position: absolute;
  left: calc(50% - 4px);
  top: 74px;
  width: 8px;
  height: 8px;
  border-radius: 50%;
  background: #e3928c;
}

.badge {
  position: absolute;
  left: calc(50% + 12px);
  top: -8px;
  width: 30px;
  height: 30px;
  border-radius: 15px;
  line-height: 30px;
  text-align: center;
  font-size: 19px;
  font-weight: 400;
  letter-spacing: -.5px;
  color: #fff;
  background: #e44b3b;
}

.wide { left: -3px; width: 84px; font-size: 17px; border-radius: 13px; letter-spacing: -.9px; white-space: nowrap; }

.rule { flex: none; width: 2px; height: 74px; margin: -2px 17px 0 18px; background: rgba(255, 255, 255, .25); }

.second { margin: -2px 17px 0 19px; }

/* Dock tooltip */
.tip {
  position: absolute;
  left: 484px;
  top: 1600px;
  width: 260px;
  height: 74px;
}

.tip svg { width: 260px; height: 74px; }

.tip span {
  position: absolute;
  left: 0;
  top: 0;
  width: 255px;
  line-height: 55px;
  text-align: center;
  font-size: 27px;
  letter-spacing: .1px;
  color: #fff;
}
```
